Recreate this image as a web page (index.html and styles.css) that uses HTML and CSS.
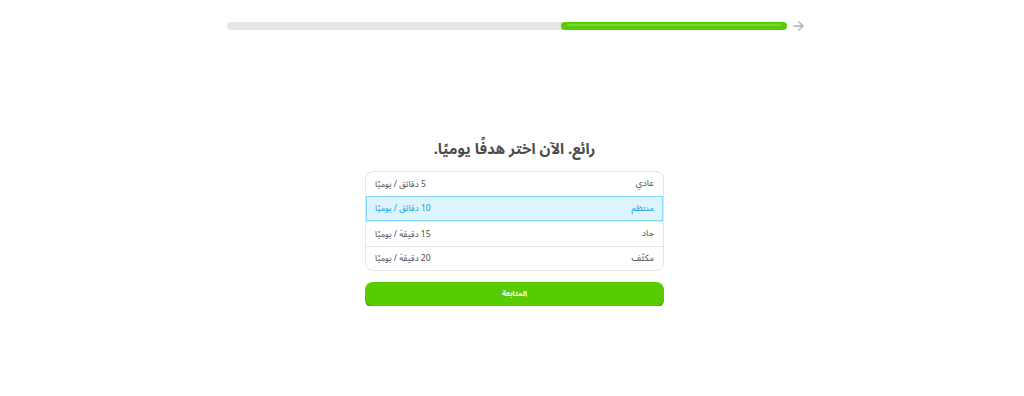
FILE: index.html
```html
<!DOCTYPE html>
<html lang="ar" dir="rtl">
<head>
<meta charset="utf-8">
<link rel="stylesheet" href="styles.css">
</head>
<body>
<header class="top">
  <div class="progress-row">
    <div class="track"><div class="fill" style="width:40.2%"><span class="shine"></span></div></div>
    <svg class="arrow" width="11" height="10" viewBox="0 0 11 10"><path d="M1 5h9M6 1l4 4-4 4" fill="none" stroke="#afafaf" stroke-width="1.4" stroke-linecap="round" stroke-linejoin="round"/></svg>
  </div>
</header>
<main class="main">
  <h1 class="title">رائع. الآن اختر هدفًا يوميًا.</h1>
  <ul class="options">
    <li class="opt"><span class="name">عادي</span><span class="time">5 دقائق / يوميًا</span></li>
    <li class="opt selected"><span class="name">منتظم</span><span class="time">10 دقائق / يوميًا</span></li>
    <li class="opt"><span class="name">جاد</span><span class="time">15 دقيقة / يوميًا</span></li>
    <li class="opt"><span class="name">مكثّف</span><span class="time">20 دقيقة / يوميًا</span></li>
  </ul>
  <button class="btn">المتابعة</button>
</main>
</body>
</html>
```
FILE: styles.css
```css
html, body {
  margin: 0;
  padding: 0;
  background: #ffffff;
  font-family: "Noto Sans", "Noto Sans Arabic", sans-serif;
  color: #4b4b4b;
}
.top {
  padding-top: 21px;
  display: flex;
  justify-content: center;
}
.progress-row {
  direction: ltr;
  width: 577px;
  margin-left: 6px;
  display: flex;
  align-items: center;
  gap: 6px;
}
.track {
  flex: 1;
  height: 8px;
  background: #e5e5e5;
  border-radius: 4px;
  display: flex;
  justify-content: flex-end;
}
.fill {
  height: 8px;
  background: #58cc02;
  border-radius: 4px;
  position: relative;
}
.shine {
  position: absolute;
  left: 6px;
  right: 6px;
  top: 2px;
  height: 2px;
  border-radius: 1px;
  background: #79d634;
}
.arrow {
  display: block;
  flex: none;
}
.main {
  width: 299px;
  margin: 106px auto 0;
  padding-left: 5px;
  display: flex;
  flex-direction: column;
}
.title {
  margin: 0 0 12px;
  text-align: center;
  font-size: 15px;
  font-weight: bold;
  line-height: 22px;
  color: #4b4b4b;
}
.options {
  list-style: none;
  margin: 0;
  padding: 0;
  border: 1px solid #e5e5e5;
  border-radius: 8px;
  overflow: hidden;
}
.opt {
  height: 23.5px;
  display: flex;
  align-items: center;
  justify-content: space-between;
  padding: 0 9px;
  font-size: 8.5px;
  font-weight: normal;
  color: #4b4b4b;
  border-top: 1px solid #e5e5e5;
}
.opt:first-child { border-top: none; }
.opt .name { font-size: 9px; }
.opt.selected {
  background: #ddf4ff;
  color: #1899d6;
  border: 1px solid #84d8ff;
  padding: 0 8px;
}
.btn {
  margin-top: 11px;
  height: 24px;
  border: none;
  border-radius: 8px;
  background: #58cc02;
  box-shadow: 0 2px 0 #58a700;
  color: #ffffff;
  font-family: inherit;
  font-size: 7.5px;
  font-weight: bold;
  cursor: pointer;
}
```
